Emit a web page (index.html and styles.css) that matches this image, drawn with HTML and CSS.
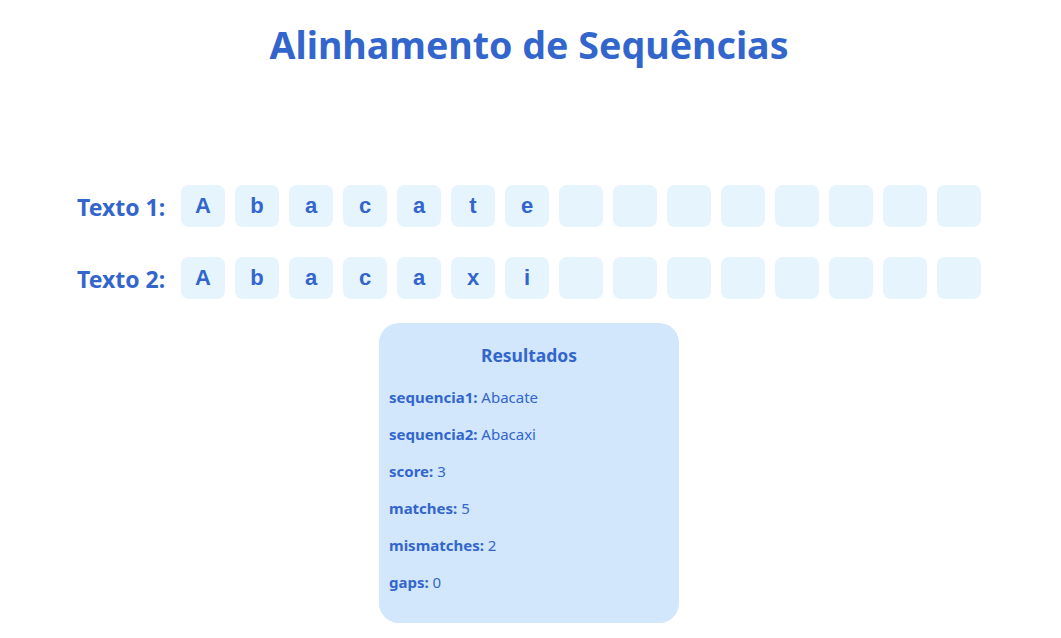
FILE: index.html
```html
<!DOCTYPE html>
<html lang="pt">
<head>
<meta charset="utf-8">
<title>Alinhamento de Sequências</title>
<link rel="stylesheet" href="styles.css">
</head>
<body>
<h1 class="title">Alinhamento de Sequências</h1>
<div class="rows">
  <div class="row">
    <span class="label">Texto 1:</span>
    <div class="cells">
      <div class="cell">A</div><div class="cell">b</div><div class="cell">a</div><div class="cell">c</div><div class="cell">a</div><div class="cell">t</div><div class="cell">e</div>
      <div class="cell"></div><div class="cell"></div><div class="cell"></div><div class="cell"></div><div class="cell"></div><div class="cell"></div><div class="cell"></div><div class="cell"></div>
    </div>
  </div>
  <div class="row">
    <span class="label">Texto 2:</span>
    <div class="cells">
      <div class="cell">A</div><div class="cell">b</div><div class="cell">a</div><div class="cell">c</div><div class="cell">a</div><div class="cell">x</div><div class="cell">i</div>
      <div class="cell"></div><div class="cell"></div><div class="cell"></div><div class="cell"></div><div class="cell"></div><div class="cell"></div><div class="cell"></div><div class="cell"></div>
    </div>
  </div>
</div>
<div class="results">
  <h2 class="results-title">Resultados</h2>
  <p class="item"><strong>sequencia1:</strong> Abacate</p>
  <p class="item"><strong>sequencia2:</strong> Abacaxi</p>
  <p class="item"><strong>score:</strong> 3</p>
  <p class="item"><strong>matches:</strong> 5</p>
  <p class="item"><strong>mismatches:</strong> 2</p>
  <p class="item"><strong>gaps:</strong> 0</p>
</div>
</body>
</html>
```
FILE: styles.css
```css
body {
  margin: 0;
  padding-right: 3px;
  font-family: "Noto Sans", "Open Sans", sans-serif;
  color: #3366cc;
  background: #fff;
}
.title {
  margin: 0;
  padding-top: 19px;
  text-align: center;
  font-size: 37.6px;
  line-height: 52px;
  font-weight: 700;
}
.rows {
  margin-top: 114px;
  display: flex;
  flex-direction: column;
  align-items: center;
  gap: 30px;
}
.row {
  display: flex;
  align-items: center;
  gap: 16px;
}
.label {
  font-size: 23px;
  font-weight: 700;
  width: 88px;
  white-space: nowrap;
  padding-top: 2px;
}
.cells {
  display: flex;
  gap: 10px;
}
.cell {
  width: 44px;
  height: 42px;
  border-radius: 8px;
  background: #e6f4fd;
  display: flex;
  align-items: center;
  justify-content: center;
  font-family: "Liberation Sans", Arial, sans-serif;
  font-weight: 700;
  font-size: 22px;
}
.results {
  width: 300px;
  height: 300px;
  box-sizing: border-box;
  margin: 24px auto 0;
  background: #d2e6fc;
  border-radius: 20px;
  padding: 20px 10px;
}
.results-title {
  margin: 0 0 11px;
  text-align: center;
  font-size: 17.5px;
  line-height: 25px;
  font-weight: 700;
}
.item {
  margin: 0;
  font-size: 15px;
  line-height: 37px;
}
.item strong {
  font-weight: 700;
}
```
